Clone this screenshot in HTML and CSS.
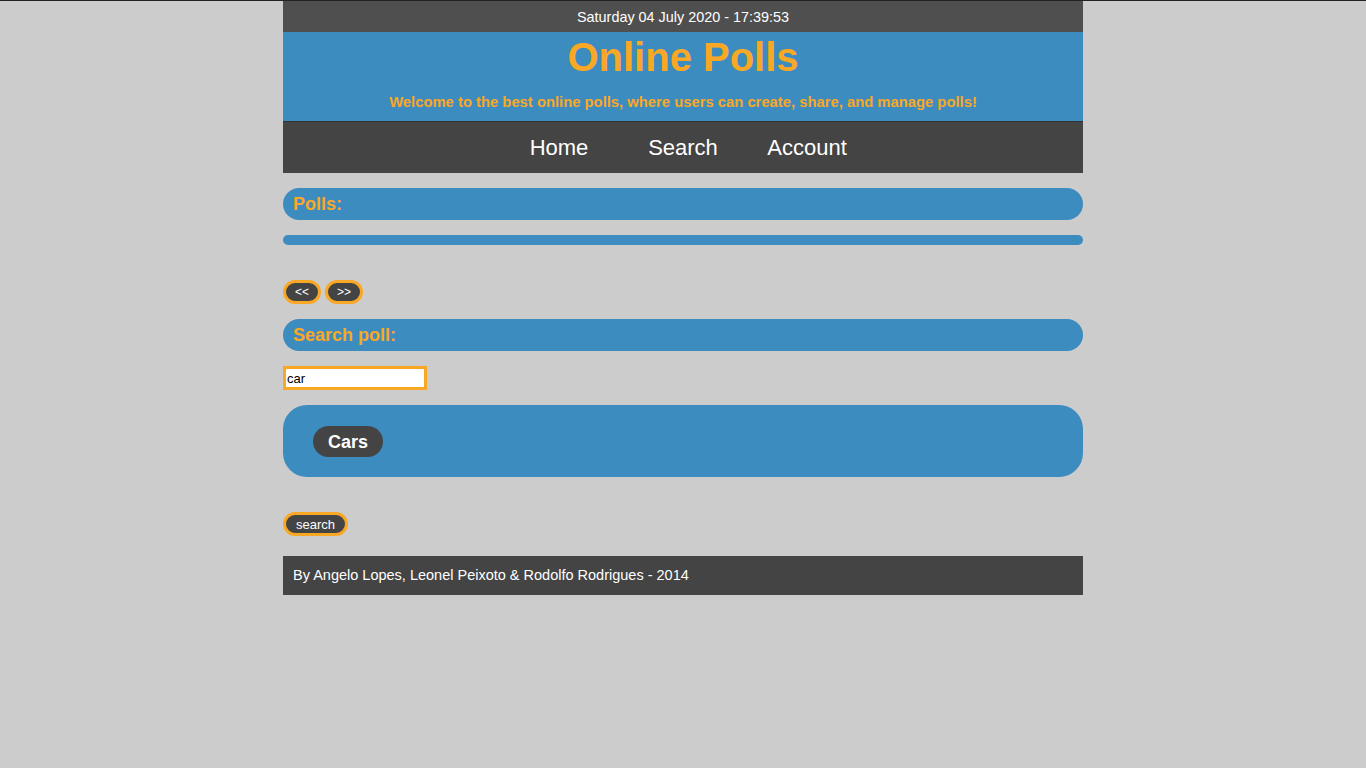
FILE: index.html
```html
<!DOCTYPE html>
<html lang="en">
<head>
    <meta charset="UTF-8">
    <title>Online Polls</title>
    <link rel="stylesheet" href="styles.css">
</head>
<body>
    <div class="page">
        <div class="date-bar">Saturday 04 July 2020 - 17:39:53</div>

        <div class="header">
            <h1>Online Polls</h1>
            <p>Welcome to the best online polls, where users can create, share, and manage polls!</p>
        </div>

        <ul class="nav">
            <li><a href="#">Home</a></li>
            <li><a href="#">Search</a></li>
            <li><a href="#">Account</a></li>
        </ul>

        <div class="content">
            <h2 class="section-title">Polls:</h2>
            <div class="poll-list"></div>

            <div class="pager">
                <button class="btn">&lt;&lt;</button>
                <button class="btn">&gt;&gt;</button>
            </div>

            <h2 class="section-title">Search poll:</h2>
            <input type="text" class="search-input" value="car">

            <div class="results">
                <span class="result-item">Cars</span>
            </div>

            <button class="btn btn-search">search</button>
        </div>

        <div class="footer">By Angelo Lopes, Leonel Peixoto &amp; Rodolfo Rodrigues - 2014</div>
    </div>
</body>
</html>
```

FILE: styles.css
```css
html {
    border-top: 1px solid #222;
}
body {
    margin: 0;
    background-color: #cccccc;
    font-family: "Liberation Sans", Arial, sans-serif;
}
.page {
    width: 800px;
    margin: 0 auto;
}
.date-bar {
    background-color: #4f4f4f;
    color: #fff;
    font-size: 14.4px;
    text-align: center;
    height: 31px;
    line-height: 33px;
    overflow: hidden;
}
.header {
    background-color: #3d8cbf;
    color: #f9a825;
    text-align: center;
    height: 89px;
    overflow: hidden;
}
.header h1 {
    margin: 0;
    padding-top: 2px;
    font-size: 40px;
    line-height: 46px;
}
.header p {
    margin: 14px 0 0;
    font-size: 14.8px;
    font-weight: bold;
}
.nav {
    list-style: none;
    margin: 0;
    padding: 0;
    background-color: #444;
    border-top: 1px solid #333;
    height: 51px;
    display: flex;
    justify-content: center;
    align-items: center;
}
.nav li {
    width: 124px;
    text-align: center;
}
.nav a {
    color: #fff;
    text-decoration: none;
    font-size: 22px;
}
.content {
    padding: 15px 0 20px;
}
.section-title {
    margin: 0 0 15px;
    background-color: #3d8cbf;
    color: #f9a825;
    font-size: 18px;
    height: 32px;
    line-height: 32px;
    padding-left: 10px;
    border-radius: 16px;
}
.poll-list {
    height: 10px;
    background-color: #3d8cbf;
    border-radius: 5px;
    margin-bottom: 35px;
}
.pager {
    display: flex;
    gap: 4px;
    margin-bottom: 15px;
}
.btn {
    background-color: #444;
    color: #fff;
    border: 3px solid #f9a825;
    border-radius: 12px;
    height: 24px;
    width: 38px;
    padding: 0;
    font-family: "Liberation Sans", Arial, sans-serif;
    font-size: 12px;
    cursor: pointer;
}
.search-input {
    display: block;
    box-sizing: border-box;
    width: 144px;
    height: 24px;
    border: 3px solid #f9a825;
    padding: 0 1px;
    font-family: "Liberation Sans", Arial, sans-serif;
    font-size: 13px;
    margin-bottom: 15px;
}
.search-input:focus {
    outline: none;
}
.results {
    background-color: #3d8cbf;
    border-radius: 24px;
    height: 72px;
    padding-left: 30px;
    box-sizing: border-box;
    display: flex;
    align-items: center;
    margin-bottom: 35px;
}
.result-item {
    background-color: #444;
    color: #fff;
    font-weight: bold;
    font-size: 18px;
    height: 31px;
    line-height: 32px;
    padding: 0 15px;
    border-radius: 16px;
}
.btn.btn-search {
    width: 65px;
    font-size: 13px;
}
.footer {
    background-color: #444;
    color: #fff;
    font-size: 14.5px;
    height: 39px;
    line-height: 39px;
    padding-left: 10px;
}
```
